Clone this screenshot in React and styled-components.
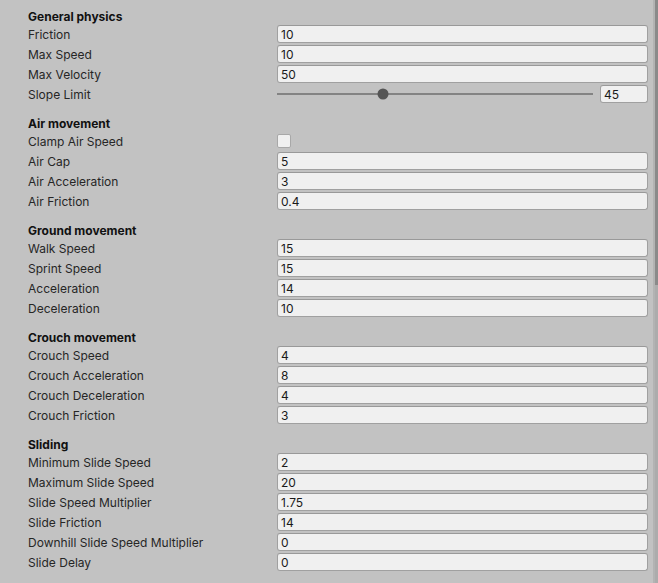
import React from "react";
import styled, { createGlobalStyle } from "styled-components";

const Global = createGlobalStyle`
  html, body { margin: 0; padding: 0; background: #c2c2c2; }
  body { font-family: Inter, "Noto Sans", sans-serif; }
  * { box-sizing: border-box; }
`;

const Frame = styled.div`
  display: flex;
  width: 658px;
  height: 583px;
  background: #c2c2c2;
  overflow: hidden;
`;

const Content = styled.div`
  flex: 1;
  padding: 7px 5px 0 28px;
`;

const Scrollbar = styled.div`
  width: 5px;
  display: flex;
  border-left: 2px solid #b3b3b3;
  background: #acacac;
`;

const Thumb = styled.div`
  width: 3px;
  height: 285px;
  background: #8a8a8a;
`;

const Section = styled.section`
  margin-bottom: 9px;
`;

const Header = styled.div`
  height: 18px;
  padding-top: 1px;
  line-height: 18px;
  font-size: 12px;
  font-weight: 700;
  color: #111;
`;

const Row = styled.div`
  display: grid;
  grid-template-columns: 249px 1fr;
  height: 20px;
  padding-bottom: 2px;
  align-items: center;
`;

const Label = styled.div`
  font-size: 12px;
  color: #262626;
  line-height: 18px;
  padding-top: 1px;
  height: 18px;
  white-space: nowrap;
`;

const Field = styled.div`
  height: 18px;
  line-height: 16px;
  background: #f0f0f0;
  border: 1px solid #a0a0a0;
  border-top-color: #999;
  border-radius: 3px;
  padding: 1px 3px 0;
  font-size: 12px;
  color: #1a1a1a;
  overflow: hidden;
  width: ${(p) => (p.$w ? `${p.$w}px` : "auto")};
  flex-shrink: 0;
`;

const Check = styled.div`
  width: 14px;
  height: 14px;
  background: #f0f0f0;
  border: 1px solid #a8a8a8;
  border-radius: 2px;
`;

const SliderWrap = styled.div`
  display: flex;
  align-items: center;
  gap: 7px;
  height: 18px;
`;

const Track = styled.div`
  position: relative;
  flex: 1;
  height: 2px;
  background: #838383;
`;

const Knob = styled.div`
  position: absolute;
  top: 50%;
  width: 11px;
  height: 11px;
  border-radius: 50%;
  background: #555;
  transform: translate(-50%, -50%);
`;

const sections = [
  {
    title: "General physics",
    rows: [
      ["Friction", "field", "10"],
      ["Max Speed", "field", "10"],
      ["Max Velocity", "field", "50"],
      ["Slope Limit", "slider", 45],
    ],
  },
  {
    title: "Air movement",
    rows: [
      ["Clamp Air Speed", "check"],
      ["Air Cap", "field", "5"],
      ["Air Acceleration", "field", "3"],
      ["Air Friction", "field", "0.4"],
    ],
  },
  {
    title: "Ground movement",
    rows: [
      ["Walk Speed", "field", "15"],
      ["Sprint Speed", "field", "15"],
      ["Acceleration", "field", "14"],
      ["Deceleration", "field", "10"],
    ],
  },
  {
    title: "Crouch movement",
    rows: [
      ["Crouch Speed", "field", "4"],
      ["Crouch Acceleration", "field", "8"],
      ["Crouch Deceleration", "field", "4"],
      ["Crouch Friction", "field", "3"],
    ],
  },
  {
    title: "Sliding",
    rows: [
      ["Minimum Slide Speed", "field", "2"],
      ["Maximum Slide Speed", "field", "20"],
      ["Slide Speed Multiplier", "field", "1.75"],
      ["Slide Friction", "field", "14"],
      ["Downhill Slide Speed Multiplier", "field", "0"],
      ["Slide Delay", "field", "0"],
    ],
  },
];

function Slider({ value, max }) {
  const t = value / max;
  return (
    <SliderWrap>
      <Track>
        <Knob style={{ left: `calc(5px + (100% - 10px) * ${t})` }} />
      </Track>
      <Field $w={48}>{value}</Field>
    </SliderWrap>
  );
}

function Control({ kind, value }) {
  if (kind === "check") return <Check />;
  if (kind === "slider") return <Slider value={value} max={136} />;
  return <Field>{value}</Field>;
}

export default function App() {
  return (
    <>
      <Global />
      <Frame>
        <Content>
          {sections.map((s) => (
            <Section key={s.title}>
              <Header>{s.title}</Header>
              {s.rows.map(([label, kind, value]) => (
                <Row key={label}>
                  <Label>{label}</Label>
                  <Control kind={kind} value={value} />
                </Row>
              ))}
            </Section>
          ))}
        </Content>
        <Scrollbar>
          <Thumb />
        </Scrollbar>
      </Frame>
    </>
  );
}
